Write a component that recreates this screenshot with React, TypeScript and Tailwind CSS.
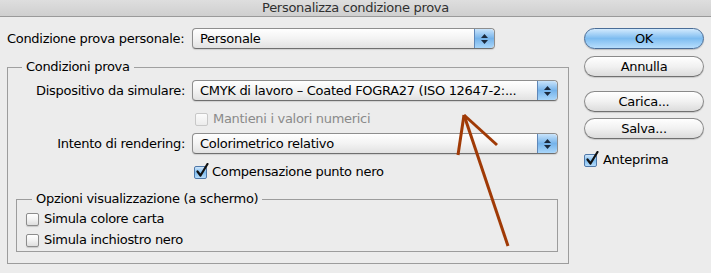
import React from "react";

const font = { fontFamily: '"DejaVu Sans", "Liberation Sans", sans-serif' };

function Stepper() {
  return (
    <div className="flex w-[20px] shrink-0 flex-col items-center justify-center gap-[2px] self-stretch rounded-r-[4px] border-l border-[#5f87b8] bg-gradient-to-b from-[#c9e4fb] via-[#75b3ea] to-[#a9d6fa]">
      <svg width="7" height="4" viewBox="0 0 7 4"><polygon points="3.5,0 7,4 0,4" fill="#1b2a3d" /></svg>
      <svg width="7" height="4" viewBox="0 0 7 4"><polygon points="0,0 7,0 3.5,4" fill="#1b2a3d" /></svg>
    </div>
  );
}

function Select({ value, w }: { value: string; w: string }) {
  return (
    <div className={`flex h-[21px] ${w} shrink-0 items-stretch overflow-hidden rounded-[4px] border border-[#8e8e8e] border-b-[#6f6f6f] bg-gradient-to-b from-[#ffffff] via-[#f3f3f3] to-[#e2e2e2] shadow-[0_1px_1px_rgba(0,0,0,0.12)]`}>
      <div className="flex flex-1 items-center overflow-hidden whitespace-nowrap pl-[7px] text-[13px] text-black">{value}</div>
      <Stepper />
    </div>
  );
}

function Check({ checked, disabled }: { checked?: boolean; disabled?: boolean }) {
  return (
    <div className="relative h-[14px] w-[14px] shrink-0">
      <div
        className={
          checked
            ? "absolute left-0 top-[1px] h-[13px] w-[13px] rounded-[2px] border border-[#4f78a8] bg-gradient-to-b from-[#cfe6fb] via-[#7fbdef] to-[#b5dcfb]"
            : disabled
            ? "absolute left-0 top-[1px] h-[13px] w-[13px] rounded-[2px] border border-[#c8c8c8] bg-gradient-to-b from-[#fbfbfb] to-[#ececec]"
            : "absolute left-0 top-[1px] h-[13px] w-[13px] rounded-[2px] border border-[#8c8c8c] bg-gradient-to-b from-[#ffffff] via-[#f2f2f2] to-[#dedede] shadow-[0_1px_1px_rgba(0,0,0,0.15)]"
        }
      />
      {checked && (
        <svg className="absolute left-[1px] top-[-2px]" width="14" height="15" viewBox="0 0 14 15">
          <path d="M2.5 8.5 L5.5 12.5 L12.5 1" fill="none" stroke="#111" strokeWidth="2.2" strokeLinecap="round" strokeLinejoin="round" />
        </svg>
      )}
    </div>
  );
}

function Btn({ label, primary }: { label: string; primary?: boolean }) {
  return (
    <div
      className={
        primary
          ? "flex h-[21px] w-[120px] items-center justify-center rounded-full border border-[#4a6d97] bg-gradient-to-b from-[#d2eafd] via-[#7dbcf0] to-[#b7defc] text-[13px] text-black shadow-[0_1px_1px_rgba(0,0,0,0.2)]"
          : "flex h-[21px] w-[120px] items-center justify-center rounded-full border border-[#8a8a8a] border-b-[#707070] bg-gradient-to-b from-[#ffffff] via-[#f1f1f1] to-[#dcdcdc] text-[13px] text-black shadow-[0_1px_1px_rgba(0,0,0,0.15)]"
      }
    >
      {label}
    </div>
  );
}

export default function App() {
  return (
    <div className="relative h-[273px] w-[711px] overflow-hidden bg-[#ececec] text-[13px] tracking-[-0.3px] text-black" style={font}>
      <div className="flex h-[17px] items-end justify-center border-b border-[#9a9a9a] bg-gradient-to-b from-[#dedede] to-[#cfcfcf] text-[13px] leading-[16px] text-[#303030]">
        Personalizza condizione prova
      </div>
      <div className="flex">
        <div className="ml-[7px] flex w-[562px] flex-col">
          <div className="mt-[11px] flex items-center">
            <div className="w-[178px] whitespace-nowrap">Condizione prova personale:</div>
            <div className="ml-[7px]">
              <Select value="Personale" w="w-[303px]" />
            </div>
          </div>
          <fieldset className="mt-[10px] h-[205px] w-[562px] border border-[#9c9c9c] border-t-[#a0a0a0]">
            <legend className="ml-[14px] px-[4px] leading-[16px]">Condizioni prova</legend>
            <div className="mt-[5px] flex items-center">
              <div className="w-[177px] whitespace-nowrap text-right">Dispositivo da simulare:</div>
              <div className="ml-[7px]">
                <Select value="CMYK di lavoro – Coated FOGRA27 (ISO 12647-2:..." w="w-[366px]" />
              </div>
            </div>
            <div className="ml-[187px] mt-[11px] flex items-center gap-[4px] text-[#8a8a8a]">
              <Check disabled />
              <span className="leading-[14px]">Mantieni i valori numerici</span>
            </div>
            <div className="mt-[7px] flex items-center">
              <div className="w-[177px] whitespace-nowrap text-right">Intento di rendering:</div>
              <div className="ml-[7px]">
                <Select value="Colorimetrico relativo" w="w-[366px]" />
              </div>
            </div>
            <div className="ml-[186px] mt-[11px] flex items-center gap-[4px]">
              <Check checked />
              <span className="leading-[14px]">Compensazione punto nero</span>
            </div>
            <fieldset className="ml-[8px] mt-[12px] h-[61px] w-[542px] border border-[#9c9c9c]">
              <legend className="ml-[15px] px-[4px] leading-[16px]">Opzioni visualizzazione (a schermo)</legend>
              <div className="ml-[9px] mt-[5px] flex items-center gap-[4px]">
                <Check />
                <span className="leading-[14px]">Simula colore carta</span>
              </div>
              <div className="ml-[9px] mt-[7px] flex items-center gap-[4px]">
                <Check />
                <span className="leading-[14px]">Simula inchiostro nero</span>
              </div>
            </fieldset>
          </fieldset>
        </div>
        <div className="ml-[15px] mt-[11px] flex flex-col">
          <Btn label="OK" primary />
          <div className="mt-[7px]"><Btn label="Annulla" /></div>
          <div className="mt-[14px]"><Btn label="Carica..." /></div>
          <div className="mt-[6px]"><Btn label="Salva..." /></div>
          <div className="mt-[14px] flex items-center gap-[5px]">
            <Check checked />
            <span className="leading-[14px]">Anteprima</span>
          </div>
        </div>
      </div>
      <svg className="pointer-events-none absolute left-0 top-0" width="711" height="273" viewBox="0 0 711 273">
        <g stroke="#a03a06" strokeWidth="3" strokeLinecap="butt" fill="none">
          <line x1="464" y1="115" x2="458" y2="155" />
          <line x1="464" y1="115" x2="497" y2="145" />
          <line x1="464" y1="115" x2="508" y2="246" />
        </g>
      </svg>
    </div>
  );
}
